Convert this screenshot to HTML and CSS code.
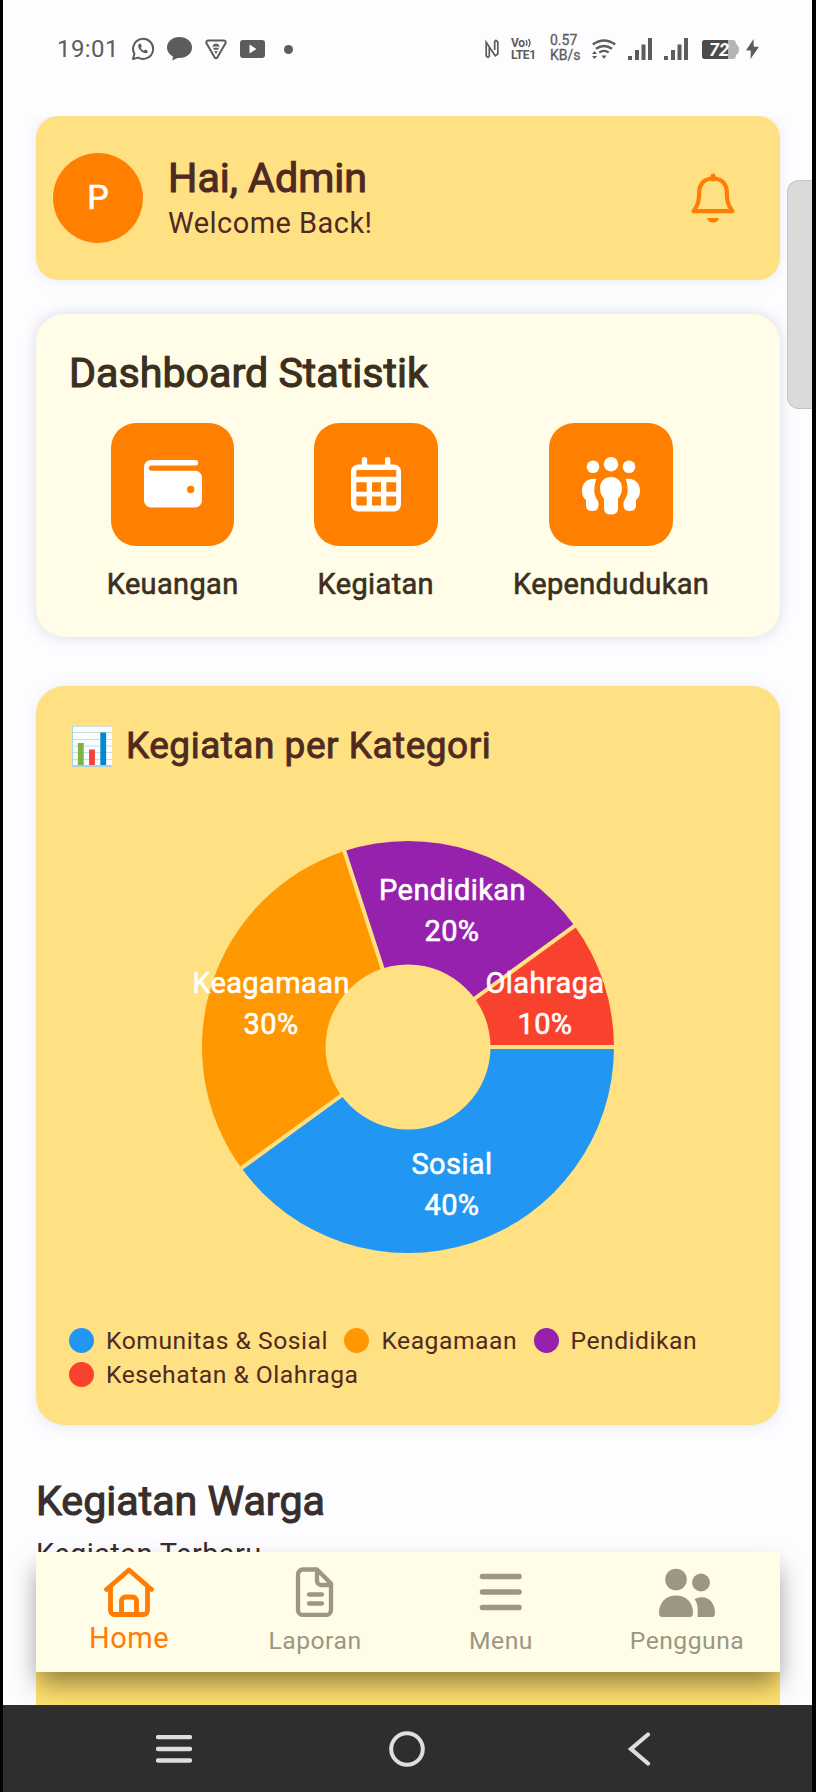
FILE: index.html
```html
<!DOCTYPE html>
<html lang="id">
<head>
<meta charset="utf-8">
<title>Dashboard</title>
<link rel="stylesheet" href="styles.css">
</head>
<body>
<div class="phone">
  <header class="status">
    <span class="clock">19:01</span>
    <svg class="s-wa" width="24" height="24" viewBox="0 0 24 24"><path d="M2 22 L3.4 16.8 A10 10 0 1 1 7.2 20.6 Z" fill="none" stroke="#5c5c5c" stroke-width="2" stroke-linejoin="round"/><path d="M8.3 6.8c-1.8 1.2-1.4 4 1.2 6.800s5.800 3.600 7.300 1.700l-.2-1.500-2.400-1.200-1.300 1.200c-1.300-.5-2.500-1.700-3.100-3.100l1-1.200-1-2.700z" fill="#5c5c5c"/></svg>
    <svg class="s-chat" width="25" height="24" viewBox="0 0 25 24"><path d="M12.500 0C5.500 0 0 4.600 0 10.500c0 3.900 2.400 7.100 6 9l-.8 4 5.300-2.600c8 .9 14.500-3.900 14.500-10.400C25 4.600 19.500 0 12.500 0z" fill="#5c5c5c"/></svg>
    <svg class="s-tri" width="22" height="21" viewBox="0 0 22 21"><path d="M3 1.500h16a1.800 1.800 0 0 1 1.500 2.700L12.300 18.500a1.500 1.500 0 0 1-2.600 0L1.500 4.200A1.800 1.800 0 0 1 3 1.500z" fill="none" stroke="#5c5c5c" stroke-width="2"/><path d="M7 7.500c2.500-4 5.500-4 8 0zM8 8.700h6l-1 2H9zM9.300 12h3.400L11 15z" fill="#5c5c5c"/></svg>
    <svg class="s-yt" width="25" height="18" viewBox="0 0 25 18"><rect width="25" height="18" rx="3" fill="#5c5c5c"/><path d="M9.500 4.500v9l7-4.500z" fill="#fdfdff"/></svg>
    <i class="s-dot"></i>
    <span class="spacer"></span>
    <svg class="s-nfc" width="14" height="20" viewBox="0 0 14 20"><path d="M3.800 18.800 1.200 17V3.200L10.200 16.800 12.800 15V2.800L10.200 1M4.300 8.500V18M9.700 1.500V11" fill="none" stroke="#5c5c5c" stroke-width="1.700"/></svg>
    <span class="volte"><span>Vo<svg width="8" height="10" viewBox="0 0 8 9"><path d="M1 1.500q2 3 0 6M3.500 .5q3 4 0 8" fill="none" stroke="#5c5c5c" stroke-width="1.300"/></svg></span><span>LTE1</span></span>
    <span class="speed"><span>0.57</span><span>KB/s</span></span>
    <svg class="s-wifi" width="24" height="21" viewBox="0 0 24 21"><g fill="none" stroke="#5c5c5c" stroke-width="2.400"><path d="M.8 5.500q11.200-8 22.400 0"/><path d="M4 9.800q8-5.600 16 0"/><path d="M7.300 13.500q4.700-3.200 9.400 0"/></g><path d="M9.500 16.500h5L12 20zM0 15l2.500-3L5 15zM0 17h5L2.500 20z" fill="#5c5c5c"/></svg>
    <svg class="s-sig" width="24" height="22" viewBox="0 0 24 22"><path d="M0 18h4v4H0zM7 12h4v10H7zM13.500 6.500h4V22h-4zM20 0h4v22h-4z" fill="#5c5c5c"/></svg>
    <svg class="s-sig" width="24" height="22" viewBox="0 0 24 22"><path d="M0 18h4v4H0zM7 12h4v10H7zM13.500 6.500h4V22h-4zM20 0h4v22h-4z" fill="#5c5c5c"/></svg>
    <svg class="s-bat" width="37" height="19" viewBox="0 0 37 19"><path d="M3 0H31q3 0 3 4 3 1.500 3 5.500t-3 5.500q0 4-3 4H3q-3 0-3-3V3Q0 0 3 0z" fill="#b4b4b4"/><path d="M3 0H26V19H3q-3 0-3-3V3Q0 0 3 0z" fill="#4b4b4b"/><text x="17" y="15.500" class="bat-text">72</text></svg>
    <svg class="s-bolt" width="13" height="20" viewBox="0 0 13 20"><path d="M7.500 0 0 11.500h4.800L4.500 20 13 7.800H7.800z" fill="#5c5c5c"/></svg>
  </header>

  <main class="content">
    <section class="card hello">
      <div class="avatar">P</div>
      <div class="greeting">
        <h1>Hai, Admin</h1>
        <p>Welcome Back!</p>
      </div>
      <svg class="bell" width="44" height="50" viewBox="0 0 44 50"><path d="M22 5.500C13 5.500 8.200 11.500 8.200 19c0 9-1 12.500-5.600 19.200h38.800C36.800 31.500 35.800 28 35.800 19 35.800 11.500 31 5.500 22 5.500z" fill="none" stroke="#ff7c05" stroke-width="4.200" stroke-linejoin="round"/><path d="M22 3v3" stroke="#ff7c05" stroke-width="5" stroke-linecap="round"/><path d="M16 45h12q-1.500 4.500-6 4.500T16 45z" fill="#ff7c05"/></svg>
    </section>

    <section class="card stats">
      <h2>Dashboard Statistik</h2>
      <div class="tiles">
        <div class="stat">
          <div class="tile"><svg width="58" height="48" viewBox="0 0 58 48"><path d="M7 0H51.500a2.700 2.700 0 0 1 0 5.400H7.500a2.700 2.700 0 0 0 0 5.400H51a7 7 0 0 1 7 7V40.500a7 7 0 0 1-7 7H7a7 7 0 0 1-7-7V7A7 7 0 0 1 7 0z" fill="#fff"/><circle cx="46.700" cy="29.500" r="3.700" fill="#ff8000"/></svg></div>
          <span>Keuangan</span>
        </div>
        <div class="stat">
          <div class="tile"><svg width="50" height="55" viewBox="0 0 50 55"><path d="M13.500 0a2.700 2.700 0 0 1 2.700 2.700V7.500H34V2.700a2.700 2.700 0 0 1 5.400 0V7.500H43a7 7 0 0 1 7 7V47.500a7 7 0 0 1-7 7H7a7 7 0 0 1-7-7V14.500a7 7 0 0 1 7-7h3.800V2.700A2.700 2.700 0 0 1 13.500 0z" fill="#fff"/><path d="M5.300 13h39.900v6.800H5.300zM5.300 25.200h10.400v9.500H5.300zM21 25.200h9v9.500H21zM35.300 25.200h9.900v9.500h-9.900zM5.300 39.500h10.400v9H7.300a2 2 0 0 1-2-2zM21 39.500h9v9H21zM35.300 39.500h9.900v7a2 2 0 0 1-2 2h-7.900z" fill="#ff8000"/></svg></div>
          <span>Kegiatan</span>
        </div>
        <div class="stat">
          <div class="tile"><svg class="crowd" width="58" height="58" viewBox="0 0 58 58" fill="#fff"><circle cx="29" cy="7.200" r="7.200"/><circle cx="11" cy="9.800" r="6.300"/><circle cx="47" cy="9.800" r="6.300"/><path d="M29 20c-6.500 0-11 4.800-11 11 0 4.200 1.200 7.500 4 10.500V51.500q0 6 7 6t7-6V41.500c2.800-3 4-6.300 4-10.500 0-6.200-4.500-11-11-11z"/><path d="M14.500 22C5 20.800 0 26.500 0 34c0 4 1.300 7 4 9v6q0 5 6.500 5 6 0 6-5.500V46c0-2-3.500-6-4-10-.4-5 .2-10 2-14z"/><path d="M43.500 22C53 20.800 58 26.500 58 34c0 4-1.300 7-4 9v6q0 5-6.500 5-6 0-6-5.500V46c0-2 3.500-6 4-10 .4-5-.2-10-2-14z"/></svg></div>
          <span>Kependudukan</span>
        </div>
      </div>
    </section>

    <section class="card chart">
      <h3><svg width="40" height="41" viewBox="0 0 41 41" preserveAspectRatio="none"><path d="M0 0h41v41H0z" fill="#fbfcfd"/><path d="M0 .5h41M0 6.500h41M0 13.500h41M0 20h41M0 26.500h41M0 33.500h41" stroke="#cfdce0"/><path d="M0 0v41M0 40h41" stroke="#a9d3dc" stroke-width="2" fill="none"/><path d="M6 17h6v22H6z" fill="#7cb342"/><path d="M17.500 23.500h6V39h-6z" fill="#f44336"/><path d="M29 6.500h6V39h-6z" fill="#0288d1"/></svg><span>Kegiatan per Kategori</span></h3>
      <svg class="pie" width="678" height="440" viewBox="-339 -220 678 440">
        <path d="M0 0H206A206 206 0 0 1 -166.660 121.080Z" fill="#2196f3"/>
        <path d="M0 0L-166.660 121.080A206 206 0 0 1 -63.660 -195.920Z" fill="#ff9800"/>
        <path d="M0 0L-63.660 -195.920A206 206 0 0 1 166.660 -121.080Z" fill="#9621ad"/>
        <path d="M0 0L166.660 -121.080A206 206 0 0 1 206 0Z" fill="#f9422e"/>
        <path d="M0 0H208M0 0L-168.300 122.300M0 0L-64.300 -197.800M0 0L168.300 -122.300" stroke="#ffe082" stroke-width="4"/>
        <circle r="82.500" fill="#ffe082"/>
        <g class="pie-text">
          <text x="44.500" y="-147">Pendidikan</text><text x="44" y="-106">20%</text>
          <text x="-137" y="-54.500">Keagamaan</text><text x="-137" y="-13.500">30%</text>
          <text x="137" y="-54.500">Olahraga</text><text x="137" y="-13.500">10%</text>
          <text x="44" y="126.500">Sosial</text><text x="44" y="168">40%</text>
        </g>
      </svg>
      <ul class="legend">
        <li><i class="blue"></i>Komunitas &amp; Sosial</li>
        <li><i class="amber"></i>Keagamaan</li>
        <li><i class="purple"></i>Pendidikan</li>
        <li><i class="red"></i>Kesehatan &amp; Olahraga</li>
      </ul>
    </section>

    <section class="warga">
      <h2>Kegiatan Warga</h2>
      <p>Kegiatan Terbaru</p>
      <div class="list-card"></div>
    </section>
  </main>

  <nav class="tabs">
    <a class="tab active"><svg width="50" height="50" viewBox="0 0 50 50" fill="none" stroke="#ff7c05" stroke-width="4.800"><path d="M2.500 22.500 25 3 47.500 22.500M6.500 20V43.500a4 4 0 0 0 4 4h29a4 4 0 0 0 4-4V20" stroke-linecap="round" stroke-linejoin="round"/><path d="M17.500 47V34a4 4 0 0 1 4-4h7a4 4 0 0 1 4 4V47"/></svg><span>Home</span></a>
    <a class="tab"><svg width="50" height="50" viewBox="0 0 50 50" fill="none" stroke="#9c9683" stroke-width="4.300" stroke-linejoin="round" stroke-linecap="round"><path d="M27 2.500H13a5 5 0 0 0-5 5V43a5 5 0 0 0 5 5H36a5 5 0 0 0 5-5V16.500L27 2.500V14a4 4 0 0 0 4 4H40.500M19 27.500H32M19 36.500H32"/></svg><span>Laporan</span></a>
    <a class="tab"><svg width="50" height="50" viewBox="0 0 50 50" stroke="#9c9683" stroke-width="5.600" stroke-linecap="round"><path d="M6.500 9.500H43M6.500 25H43M6.500 40.500H43"/></svg><span>Menu</span></a>
    <a class="tab"><svg width="56" height="50" viewBox="0 0 56 50" fill="#9c9683"><circle cx="17" cy="12.500" r="10.800"/><circle cx="42" cy="15.500" r="9"/><path d="M0 46C0 35 7 28.500 17 28.500S34 35 34 46q0 4-3 4H3q-3 0-3-4z"/><path d="M35.500 32C47 26.500 56 34 56 46q0 4-3 4H38.500C39 42 39 37 35.500 32z"/></svg><span>Pengguna</span></a>
  </nav>

  <footer class="system">
    <svg width="36" height="28" viewBox="0 0 36 28" stroke="#dedede" stroke-width="4.300" stroke-linecap="round"><path d="M2 2.200H34M2 14H34M2 25.500H34"/></svg>
    <svg width="36" height="36" viewBox="0 0 36 36"><circle cx="18" cy="18" r="15.800" fill="none" stroke="#dedede" stroke-width="4"/></svg>
    <svg width="36" height="34" viewBox="0 0 36 34"><path d="M26 2.500 9 17 26 31.500" fill="none" stroke="#dedede" stroke-width="4.200" stroke-linecap="round"/></svg>
  </footer>
  <div class="thumb"></div>
</div>
</body>
</html>
```

FILE: styles.css
```css
* { box-sizing: border-box; margin: 0; padding: 0; }
body { background: #000; font-family: Roboto, sans-serif; }
svg { display: block; flex: none; }

.phone {
  position: relative;
  display: flex;
  flex-direction: column;
  width: 809px;
  height: 1792px;
  margin-left: 3px;
  overflow: hidden;
  background: #fdfdff;
}

.status {
  display: flex;
  align-items: center;
  flex: none;
  height: 116px;
  padding: 0 53px 18px 54px;
  color: #5c5c5c;
}
.clock { width: 74px; font-size: 24px; letter-spacing: .4px; line-height: 28px; }
.s-chat { margin-left: 12px; }
.s-tri { margin-left: 13px; }
.s-yt { margin-left: 13px; }
.s-dot { width: 9px; height: 9px; margin-left: 19px; border-radius: 50%; background: #5c5c5c; }
.spacer { flex: 1; }
.volte, .speed { display: flex; flex-direction: column; }
.volte { width: 27px; margin-left: 12px; font-size: 12px; font-weight: 700; line-height: 12px; letter-spacing: -.4px; white-space: nowrap; }
.volte span { display: flex; align-items: center; }
.speed { width: 30px; margin: -2px 12px 0 12px; font-size: 14px; line-height: 15px; -webkit-text-stroke: .3px currentColor; }
.s-sig { margin-left: 12px; }
.s-bat { margin-left: 14px; }
.s-bolt { margin-left: 7px; }
.bat-text { font-size: 18px; font-weight: 700; font-style: italic; fill: #fff; text-anchor: middle; }

.content { flex: none; height: 1589px; padding: 0 32px 0 33px; overflow: hidden; }
.status, .content { position: relative; }
h1, h2 { font-size: 41.200px; font-weight: 400; line-height: 48px; white-space: nowrap; -webkit-text-stroke: 1.100px currentColor; }
.card { border-radius: 28px; }

.hello {
  display: flex;
  align-items: center;
  height: 164px;
  padding: 0 45px 0 17px;
  border-radius: 22px;
  background: #ffe082;
  box-shadow: 0 0 12px rgba(120, 110, 200, .16);
  color: #4e2a22;
}
.avatar {
  width: 90px;
  height: 90px;
  border-radius: 50%;
  background: #ff8000;
  color: #fff;
  font-size: 34px;
  line-height: 88px;
  text-align: center;
  -webkit-text-stroke: .7px currentColor;
}
.greeting { flex: 1; margin-left: 25px; }
.greeting h1 { line-height: 49px; }
.greeting p { font-size: 29px; line-height: 40px; letter-spacing: .45px; }

.stats {
  height: 323px;
  margin-top: 34px;
  padding: 35px 33px 0;
  background: #fffde7;
  box-shadow: 0 0 13px rgba(90, 90, 150, .24);
  color: #3c2f20;
}
.tiles { display: flex; justify-content: space-around; margin-top: 25.500px; }
.stat { display: flex; flex-direction: column; align-items: center; font-size: 29px; line-height: 34px; letter-spacing: .35px; -webkit-text-stroke: .6px currentColor; }
.tile {
  display: flex;
  align-items: center;
  justify-content: center;
  width: 123.500px;
  height: 123.500px;
  margin-bottom: 20.500px;
  border-radius: 25px;
  background: #ff8000;
}
.crowd { margin-top: 3px; }

.chart {
  height: 739px;
  margin-top: 49px;
  padding: 38px 33px 0;
  background: #ffe082;
  box-shadow: 0 2px 12px rgba(120, 110, 200, .16);
  color: #4e2a22;
}
.chart h3 { display: flex; align-items: center; gap: 14px; padding-left: 3px; font-size: 37px; font-weight: 400; line-height: 44px; letter-spacing: .5px; -webkit-text-stroke: .9px currentColor; }
.pie { margin-top: 59px; }
.pie-text { font-size: 29px; letter-spacing: .4px; fill: #fff; stroke: #fff; stroke-width: .6px; text-anchor: middle; }
.legend { display: flex; flex-wrap: wrap; column-gap: 16.500px; margin-top: 56px; list-style: none; }
.legend li { display: flex; align-items: center; gap: 12px; height: 34.500px; font-size: 24.700px; letter-spacing: .5px; }
.legend i { width: 25px; height: 25px; border-radius: 50%; }
.blue { background: #2196f3; }
.amber { background: #ff9800; }
.purple { background: #9621ad; }
.red { background: #f9422e; }

.warga { margin-top: 52px; color: #382e2c; }
.warga p { margin-top: 12px; font-size: 29px; line-height: 34px; letter-spacing: .4px; }
.list-card { height: 200px; margin-top: 30px; background: #ffe06e; }

.tabs {
  position: absolute;
  left: 33px;
  top: 1552px;
  display: grid;
  grid-template-columns: repeat(4, 1fr);
  width: 744px;
  height: 120px;
  background: #fffde7;
  box-shadow: 0 14px 24px -2px rgba(0, 0, 0, .42);
}
.tab { display: flex; flex-direction: column; align-items: center; padding-top: 15px; color: #9c9683; font-size: 24.700px; letter-spacing: .5px; line-height: 30px; }
.tab span { margin-top: 8.500px; }
.tab.active { color: #ff7c05; font-size: 29px; }
.tab.active span { margin-top: 6px; }

.system { position: relative; display: flex; align-items: center; justify-content: space-between; flex: none; height: 87px; padding: 0 154px 0 153px; background: #2e2e2e; }

.thumb { position: absolute; right: 0; top: 180px; width: 25px; height: 229px; border: 1px solid #c3c6bd; border-right: 0; border-radius: 12px 0 0 12px; background: #dadbd8; }
```
